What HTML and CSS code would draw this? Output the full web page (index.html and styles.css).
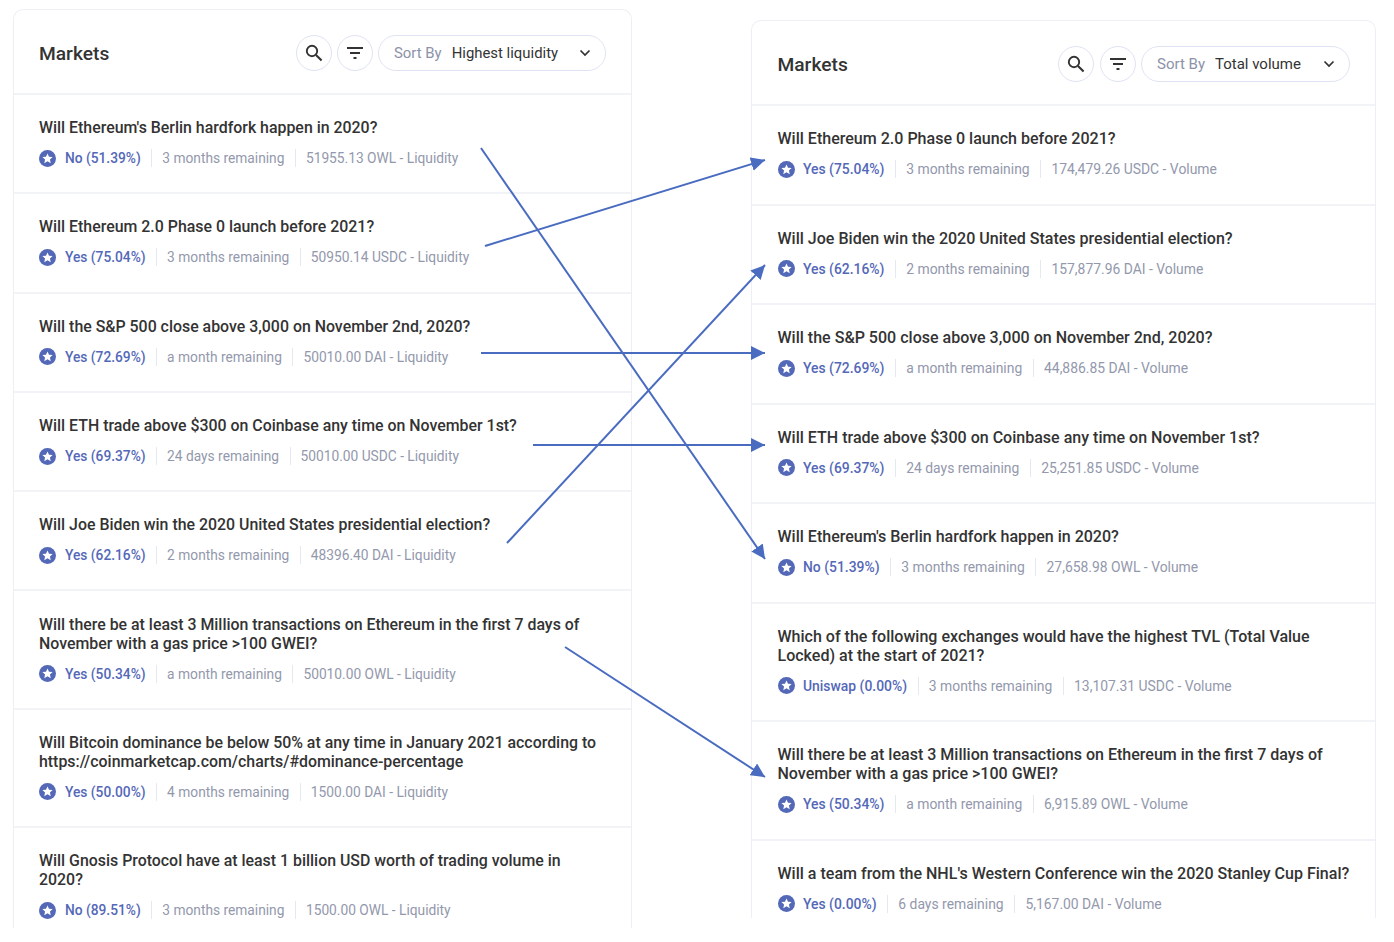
FILE: index.html
```html
<!DOCTYPE html>
<html lang="en">
<head>
    <meta charset="UTF-8">
    <title>Markets</title>
    <link rel="stylesheet" href="styles.css">
</head>
<body>
    <svg width="0" height="0" class="defs">
        <symbol id="star" viewBox="0 0 18 18">
            <circle cx="9" cy="9" r="9" fill="#5468b8"/>
            <path d="M9 3.600l1.600 3.500 3.800.4-2.800 2.600.8 3.800L9 12l-3.400 1.900.8-3.800-2.800-2.600 3.800-.4z" fill="#fff"/>
        </symbol>
        <symbol id="search" viewBox="0 0 20 20">
            <circle cx="8" cy="8" r="5.200" fill="none" stroke="#333" stroke-width="1.900"/>
            <path d="M12 12l5.600 5.600" stroke="#333" stroke-width="2.100" fill="none"/>
        </symbol>
        <symbol id="filter" viewBox="0 0 20 20">
            <path d="M2 5h16M5 10h10M8.500 15h3" stroke="#333" stroke-width="1.800" fill="none"/>
        </symbol>
        <symbol id="chevron" viewBox="0 0 12 8">
            <path d="M1.500 1.500L6 6l4.500-4.500" stroke="#333" stroke-width="1.700" fill="none"/>
        </symbol>
    </svg>

    <div class="page">
        <section class="panel panel-left">
            <header class="panel-head">
                <h2>Markets</h2>
                <div class="tools">
                    <button class="round-btn"><svg class="ico"><use href="#search"/></svg></button>
                    <button class="round-btn"><svg class="ico"><use href="#filter"/></svg></button>
                    <button class="sort-btn"><span class="sort-label">Sort By</span><span class="sort-value">Highest liquidity</span><svg class="chev"><use href="#chevron"/></svg></button>
                </div>
            </header>
            <div class="row">
                <h3>Will Ethereum's Berlin hardfork happen in 2020?</h3>
                <div class="meta"><svg class="star"><use href="#star"/></svg><span class="outcome">No (51.39%)</span><span>3 months remaining</span><span>51955.13 OWL - Liquidity</span></div>
            </div>
            <div class="row">
                <h3>Will Ethereum 2.0 Phase 0 launch before 2021?</h3>
                <div class="meta"><svg class="star"><use href="#star"/></svg><span class="outcome">Yes (75.04%)</span><span>3 months remaining</span><span>50950.14 USDC - Liquidity</span></div>
            </div>
            <div class="row">
                <h3>Will the S&amp;P 500 close above 3,000 on November 2nd, 2020?</h3>
                <div class="meta"><svg class="star"><use href="#star"/></svg><span class="outcome">Yes (72.69%)</span><span>a month remaining</span><span>50010.00 DAI - Liquidity</span></div>
            </div>
            <div class="row">
                <h3>Will ETH trade above $300 on Coinbase any time on November 1st?</h3>
                <div class="meta"><svg class="star"><use href="#star"/></svg><span class="outcome">Yes (69.37%)</span><span>24 days remaining</span><span>50010.00 USDC - Liquidity</span></div>
            </div>
            <div class="row">
                <h3>Will Joe Biden win the 2020 United States presidential election?</h3>
                <div class="meta"><svg class="star"><use href="#star"/></svg><span class="outcome">Yes (62.16%)</span><span>2 months remaining</span><span>48396.40 DAI - Liquidity</span></div>
            </div>
            <div class="row">
                <h3>Will there be at least 3 Million transactions on Ethereum in the first 7 days of November with a gas price &gt;100 GWEI?</h3>
                <div class="meta"><svg class="star"><use href="#star"/></svg><span class="outcome">Yes (50.34%)</span><span>a month remaining</span><span>50010.00 OWL - Liquidity</span></div>
            </div>
            <div class="row">
                <h3>Will Bitcoin dominance be below 50% at any time in January 2021 according to https://coinmarketcap.com/charts/#dominance-percentage</h3>
                <div class="meta"><svg class="star"><use href="#star"/></svg><span class="outcome">Yes (50.00%)</span><span>4 months remaining</span><span>1500.00 DAI - Liquidity</span></div>
            </div>
            <div class="row">
                <h3>Will Gnosis Protocol have at least 1 billion USD worth of trading volume in 2020?</h3>
                <div class="meta"><svg class="star"><use href="#star"/></svg><span class="outcome">No (89.51%)</span><span>3 months remaining</span><span>1500.00 OWL - Liquidity</span></div>
            </div>
        </section>

        <section class="panel panel-right">
            <header class="panel-head">
                <h2>Markets</h2>
                <div class="tools">
                    <button class="round-btn"><svg class="ico"><use href="#search"/></svg></button>
                    <button class="round-btn"><svg class="ico"><use href="#filter"/></svg></button>
                    <button class="sort-btn"><span class="sort-label">Sort By</span><span class="sort-value">Total volume</span><svg class="chev"><use href="#chevron"/></svg></button>
                </div>
            </header>
            <div class="row">
                <h3>Will Ethereum 2.0 Phase 0 launch before 2021?</h3>
                <div class="meta"><svg class="star"><use href="#star"/></svg><span class="outcome">Yes (75.04%)</span><span>3 months remaining</span><span>174,479.26 USDC - Volume</span></div>
            </div>
            <div class="row">
                <h3>Will Joe Biden win the 2020 United States presidential election?</h3>
                <div class="meta"><svg class="star"><use href="#star"/></svg><span class="outcome">Yes (62.16%)</span><span>2 months remaining</span><span>157,877.96 DAI - Volume</span></div>
            </div>
            <div class="row">
                <h3>Will the S&amp;P 500 close above 3,000 on November 2nd, 2020?</h3>
                <div class="meta"><svg class="star"><use href="#star"/></svg><span class="outcome">Yes (72.69%)</span><span>a month remaining</span><span>44,886.85 DAI - Volume</span></div>
            </div>
            <div class="row">
                <h3>Will ETH trade above $300 on Coinbase any time on November 1st?</h3>
                <div class="meta"><svg class="star"><use href="#star"/></svg><span class="outcome">Yes (69.37%)</span><span>24 days remaining</span><span>25,251.85 USDC - Volume</span></div>
            </div>
            <div class="row">
                <h3>Will Ethereum's Berlin hardfork happen in 2020?</h3>
                <div class="meta"><svg class="star"><use href="#star"/></svg><span class="outcome">No (51.39%)</span><span>3 months remaining</span><span>27,658.98 OWL - Volume</span></div>
            </div>
            <div class="row">
                <h3>Which of the following exchanges would have the highest TVL (Total Value Locked) at the start of 2021?</h3>
                <div class="meta"><svg class="star"><use href="#star"/></svg><span class="outcome">Uniswap (0.00%)</span><span>3 months remaining</span><span>13,107.31 USDC - Volume</span></div>
            </div>
            <div class="row">
                <h3>Will there be at least 3 Million transactions on Ethereum in the first 7 days of November with a gas price &gt;100 GWEI?</h3>
                <div class="meta"><svg class="star"><use href="#star"/></svg><span class="outcome">Yes (50.34%)</span><span>a month remaining</span><span>6,915.89 OWL - Volume</span></div>
            </div>
            <div class="row">
                <h3>Will a team from the NHL's Western Conference win the 2020 Stanley Cup Final?</h3>
                <div class="meta"><svg class="star"><use href="#star"/></svg><span class="outcome">Yes (0.00%)</span><span>6 days remaining</span><span>5,167.00 DAI - Volume</span></div>
            </div>
        </section>

        <!-- arrows drawn over both lists -->
        <svg class="arrows" viewBox="0 0 1394 942">
            <defs>
                <marker id="head" markerUnits="userSpaceOnUse" markerWidth="15" markerHeight="14" refX="14" refY="7" orient="auto">
                    <path d="M0 0L14 7L0 14z" fill="#4a6cc0"/>
                </marker>
            </defs>
            <line x1="481" y1="148" x2="765" y2="559" marker-end="url(#head)"/>
            <line x1="485" y1="246" x2="765" y2="160" marker-end="url(#head)"/>
            <line x1="481" y1="353" x2="765" y2="353" marker-end="url(#head)"/>
            <line x1="533" y1="445" x2="765" y2="445" marker-end="url(#head)"/>
            <line x1="507" y1="543" x2="765" y2="265" marker-end="url(#head)"/>
            <line x1="565" y1="647" x2="765" y2="777" marker-end="url(#head)"/>
        </svg>
    </div>
</body>
</html>
```

FILE: styles.css
```css
html, body {
    margin: 0;
    background: #fff;
}
.defs {
    position: absolute;
}
.page {
    position: relative;
    display: flex;
    align-items: flex-start;
    gap: 119px;
    width: 1394px;
    height: 942px;
    padding: 9px 0 0 13px;
    box-sizing: border-box;
    overflow: hidden;
    font-family: Roboto, "Liberation Sans", sans-serif;
}
.panel {
    flex: none;
    box-sizing: border-box;
    overflow: hidden;
    background: #fff;
    border: 1px solid #eeeff4;
    border-bottom: none;
    border-radius: 10px 10px 0 0;
}
.panel-left {
    width: 619px;
    height: 919px;
}
.panel-right {
    width: 625px;
    height: 898px;
    margin-top: 11px;
}
.panel-head {
    display: flex;
    align-items: center;
    justify-content: space-between;
    box-sizing: border-box;
    height: 85px;
    padding: 3px 25px 0 25.500px;
    border-bottom: 2px solid #f2f3f7;
}
.panel-left .panel-head {
    padding-left: 25px;
}
.panel-head h2 {
    margin: 0;
    font-size: 19.200px;
    font-weight: 500;
    color: #333;
}
.tools {
    display: flex;
    align-items: center;
    gap: 5.500px;
}
.panel-left .tools {
    gap: 5px;
}
.round-btn, .sort-btn {
    box-sizing: border-box;
    height: 36px;
    padding: 0;
    background: #fff;
    border: 1.500px solid #dfe3f3;
    border-radius: 18px;
    display: flex;
    align-items: center;
    font-family: inherit;
}
.round-btn {
    width: 36px;
    justify-content: center;
}
.ico {
    width: 20px;
    height: 20px;
}
.sort-btn {
    padding: 0 14px 0 15px;
    font-size: 15px;
}
.panel-left .sort-btn {
    width: 228px;
    font-size: 14.900px;
}
.panel-right .sort-btn {
    width: 209px;
}
.sort-label {
    color: #8c92a8;
    margin-right: 10px;
}
.sort-value {
    color: #333;
    flex: 1;
    text-align: left;
}
.chev {
    width: 12px;
    height: 8px;
}
.row {
    box-sizing: border-box;
    padding: 24px 20px 23.500px 25.500px;
    border-bottom: 2px solid #f2f3f7;
}
.panel-left .row {
    padding: 23.200px 26px 23.100px 25px;
}
.row h3 {
    margin: 0 0 9.400px;
    font-size: 16.050px;
    line-height: 18.700px;
    font-weight: 500;
    color: #333;
}
.panel-left .row h3 {
    margin-bottom: 10px;
    font-size: 15.900px;
    line-height: 19px;
}
.meta {
    display: flex;
    align-items: center;
    height: 22px;
    font-size: 13.900px;
    color: #9398ac;
}
.panel-left .meta {
    font-size: 13.750px;
}
.star {
    width: 17px;
    height: 17px;
    margin-right: 8.500px;
}
.panel-left .star {
    margin-right: 9px;
}
.meta span {
    padding-right: 10.500px;
    margin-right: 10.300px;
    border-right: 1px solid #e6e8f1;
    line-height: 18px;
}
.panel-left .meta span {
    margin-right: 10px;
}
.meta span:last-child,
.panel-left .meta span:last-child {
    border-right: none;
    padding-right: 0;
    margin-right: 0;
}
.meta .outcome {
    color: #5468b8;
    font-weight: 500;
}
.arrows {
    position: absolute;
    left: 0;
    top: 0;
    width: 1394px;
    height: 942px;
    pointer-events: none;
}
.arrows line {
    stroke: #4a6cc0;
    stroke-width: 2;
}
```
